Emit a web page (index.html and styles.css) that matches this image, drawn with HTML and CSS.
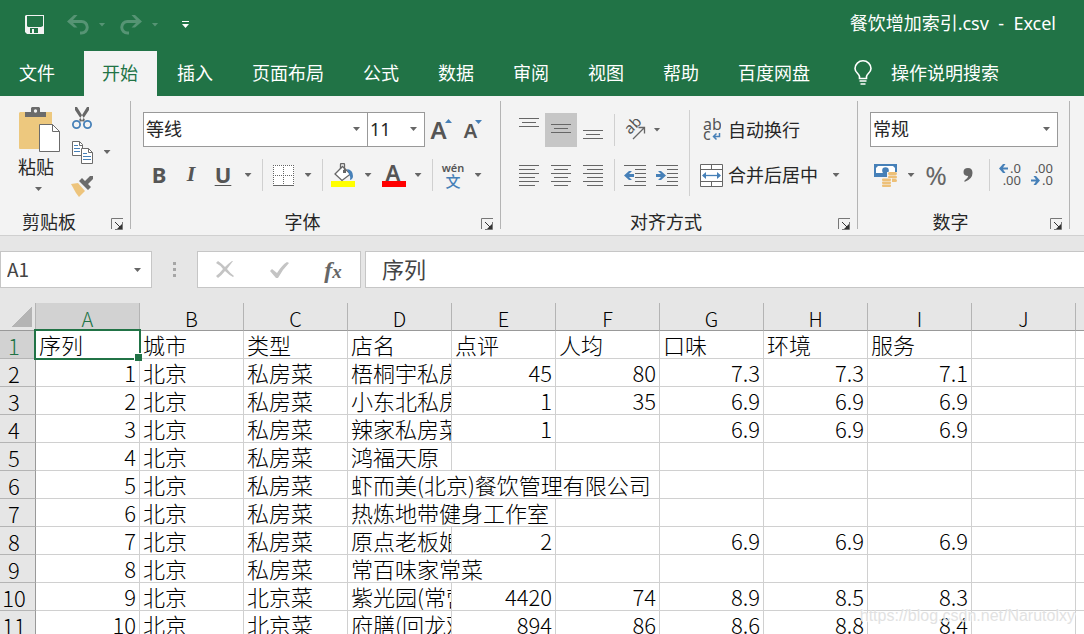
FILE: index.html
```html
<!DOCTYPE html>
<html lang="zh-CN">
<head>
<meta charset="utf-8">
<meta name="viewport" content="width=device-width, initial-scale=1">
<title>餐饮增加索引.csv - Excel</title>
<link rel="stylesheet" href="styles.css">
</head>
<body>
<header class="app-header">
  <div class="titlebar">
    <button class="quick" aria-label="保存"><svg width="20" height="20" viewBox="0 0 20 20"><path fill="#f3f3f3" fill-rule="evenodd" d="M1 0h18v19H2L0 17V1zM2 1v10l1 1h13l2-1V1zM5 13v5h2v-4h2v4h4v-5z"/></svg></button>
    <div class="quick-pair">
      <button class="quick faded" aria-label="撤消"><svg width="22" height="20" viewBox="0 0 22 20"><path fill="currentColor" d="M0 6.500L7 0h3.500L6 5h8.500a7 7 0 0 1 0 14.500H13v-3h1.500a4.200 4.200 0 0 0 0-8.500H6l4.500 4.500H7z"/></svg></button>
      <button class="quick-arrow faded" aria-label="撤消列表"><i class="caret"></i></button>
    </div>
    <div class="quick-pair">
      <button class="quick faded" aria-label="恢复"><svg width="22" height="20" viewBox="0 0 22 20"><path fill="currentColor" d="M22 6.500L15 0h-3.500L16 5H7.500a7 7 0 0 0 0 14.500H9v-3H7.500a4.200 4.200 0 0 1 0-8.500H16l-4.500 4.500H15z"/></svg></button>
      <button class="quick-arrow faded" aria-label="恢复列表"><i class="caret"></i></button>
    </div>
    <button class="quick customize" aria-label="自定义快速访问工具栏"><svg width="7" height="7" viewBox="0 0 7 7" fill="#fff"><path d="M0 0h7v1H0zM0 3h7L3.500 7z"/></svg></button>
    <h1 class="doc-title">餐饮增加索引.csv&nbsp; -&nbsp; Excel</h1>
  </div>
  <nav class="tabs">
    <button class="tab file">文件</button>
    <button class="tab active">开始</button>
    <button class="tab">插入</button>
    <button class="tab">页面布局</button>
    <button class="tab">公式</button>
    <button class="tab">数据</button>
    <button class="tab">审阅</button>
    <button class="tab">视图</button>
    <button class="tab">帮助</button>
    <button class="tab">百度网盘</button>
    <button class="tell-me"><svg width="18" height="25" viewBox="0 0 18 25" fill="none" stroke="#fff" stroke-width="1.600"><path d="M5.500 18.500v-2C5 13.500 1 12.500 1 8.500a8 7.700 0 0 1 16 0c0 4-4 5-4.500 8v2z"/><path d="M5.500 21h7M6.500 24h5"/></svg>操作说明搜索</button>
  </nav>
</header>

<section class="ribbon" aria-label="功能区">
  <div class="group clipboard">
    <div class="clip-tools">
      <button class="paste">
        <svg width="42" height="46" viewBox="0 0 42 46"><path fill="#edc87e" d="M1 5h32v37H1a1 1 0 0 1-1-1V6z"/><path fill="#6b6b6b" d="M6 5h6V1l1-1h7l1 1v4h6v5H6z"/><circle cx="16.500" cy="4" r="1.700" fill="#f3f3f3"/><path fill="#fff" stroke="#6b6b6b" d="M20.500 17.500h13l7 7v20h-20z"/><path fill="none" stroke="#6b6b6b" d="M33.500 17.500v7h7"/></svg>
        <span>粘贴</span>
        <i class="caret"></i>
      </button>
      <div class="clip-col">
        <div class="row"><button class="tool" aria-label="剪切"><svg width="20" height="24" viewBox="0 0 20 24"><path fill="#666" d="M3 1l2 0 8 13-2 2L3 4zM17 1l-2 0L7 14l2 2L17 4z"/><g fill="none" stroke="#4680b8" stroke-width="1.800"><circle cx="4.500" cy="18.500" r="3.600"/><circle cx="15.500" cy="18.500" r="3.600"/></g></svg></button></div>
        <div class="row"><button class="tool" aria-label="复制"><svg width="21" height="23" viewBox="0 0 21 23"><g fill="#fff" stroke="#6b6b6b"><path d="M.5.500h7l3 3v11H.5z"/><path d="M9.500 7.500h7l4 4v11h-11z"/></g><path fill="none" stroke="#6b6b6b" d="M7.500.500v4h3M16.500 7.500v4h4"/><path stroke="#4680b8" d="M2 4.500h4M2 7.500h6M2 10.500h6M11 12.500h4M11 15.500h8M11 18.500h8"/></svg></button><button class="drop" aria-label="复制选项"><i class="caret"></i></button></div>
        <div class="row"><button class="tool" aria-label="格式刷"><svg width="24" height="22" viewBox="0 0 24 22"><path fill="#edc47c" d="M1 9l7-1 7 8-6 6-3-4z"/><path fill="#6b6b6b" d="M9 6l3-3 3 3 5-5h3v3l-5 5 3 3-3 3z"/></svg></button></div>
      </div>
    </div>
    <div class="group-foot"><span>剪贴板</span><button class="launch" aria-label="剪贴板设置"><svg width="12" height="12" viewBox="0 0 12 12"><path fill="none" stroke="#777" d="M.5 11V.500H12M11.500 4v7.500H4"/><path stroke="#333" d="M4 4l6 6"/><path fill="#333" d="M11 6v5H6z"/></svg></button></div>
  </div>
  <i class="divider"></i>

  <div class="group font">
    <div class="row boxes">
      <span class="select font-name"><select aria-label="字体"><option>等线</option></select></span><span class="select font-size"><select aria-label="字号"><option>11</option></select></span>
      <button class="tool letter grow" aria-label="增大字号">A<svg width="7" height="4" viewBox="0 0 7 4"><path fill="#4680b8" d="M0 4L3.500 0 7 4z"/></svg></button>
      <button class="tool letter shrink" aria-label="减小字号">A<svg width="7" height="4" viewBox="0 0 7 4"><path fill="#4680b8" d="M0 0l3.500 4L7 0z"/></svg></button>
    </div>
    <div class="row lower">
      <button class="tool glyph bold">B</button>
      <button class="tool glyph italic">I</button>
      <button class="tool glyph under">U</button>
      <button class="drop" aria-label="下划线选项"><i class="caret"></i></button>
      <i class="rule"></i>
      <button class="tool" aria-label="边框"><svg width="21" height="21" viewBox="0 0 21 21"><path fill="#fff" d="M0 0h21v21H0z"/><path stroke="#666" stroke-dasharray="1 1" d="M0 .500h21M0 10.500h21M.5 0v20M10.500 0v20M20.500 0v20"/><path stroke="#666" d="M0 20.500h21"/></svg></button>
      <button class="drop" aria-label="边框选项"><i class="caret"></i></button>
      <i class="rule"></i>
      <button class="tool" aria-label="填充颜色"><svg width="24" height="24" viewBox="0 0 24 24"><path fill="#ff0" d="M0 18h24v6H0z"/><path fill="#fff" stroke="#666" stroke-width="1.300" d="M11.500 3.500l8 7.500-8.500 6.500L4 11z"/><path fill="none" stroke="#666" stroke-width="1.300" d="M9.500 6V1.500q0-1 1-1h2q1 0 1 1V9"/><path fill="#666" d="M12 7h3v3h-3z"/><path fill="#4680b8" d="M16 6q6 1 6 7 0 3-3 4 1-3-1-6z"/></svg></button>
      <button class="drop" aria-label="填充选项"><i class="caret"></i></button>
      <button class="tool font-color" aria-label="字体颜色">A</button>
      <button class="drop" aria-label="字体颜色选项"><i class="caret"></i></button>
      <i class="rule"></i>
      <button class="tool pinyin" aria-label="拼音"><span>wén</span><b>文</b></button>
      <button class="drop" aria-label="拼音选项"><i class="caret"></i></button>
    </div>
    <div class="group-foot"><span>字体</span><button class="launch" aria-label="字体设置"><svg width="12" height="12" viewBox="0 0 12 12"><path fill="none" stroke="#777" d="M.5 11V.500H12M11.500 4v7.500H4"/><path stroke="#333" d="M4 4l6 6"/><path fill="#333" d="M11 6v5H6z"/></svg></button></div>
  </div>
  <i class="divider"></i>

  <div class="group">
    <div class="align-tools">
      <div>
        <div class="row boxes">
          <button class="tool top" aria-label="顶端对齐"><svg width="20" height="9" viewBox="0 0 20 9"><path stroke="#666" d="M0 .500h20M3 4.500h14M0 8.500h20"/></svg></button>
          <button class="tool pressed" aria-label="垂直居中"><svg width="20" height="9" viewBox="0 0 20 9"><path stroke="#666" d="M0 .500h20M3 4.500h14M0 8.500h20"/></svg></button>
          <button class="tool bottom" aria-label="底端对齐"><svg width="20" height="9" viewBox="0 0 20 9"><path stroke="#666" d="M0 .500h20M3 4.500h14M0 8.500h20"/></svg></button>
          <i class="rule"></i>
          <button class="tool" aria-label="方向"><svg width="22" height="22" viewBox="0 0 22 22"><text class="svg-text" font-size="15" transform="translate(6 16) rotate(-45)">ab</text><path fill="none" stroke="#666" stroke-width="1.300" d="M9 20L20 9M14.500 8.500H20.500V14.500"/></svg></button>
          <button class="drop tight" aria-label="方向选项"><i class="caret"></i></button>
        </div>
        <div class="row lower">
          <button class="tool" aria-label="左对齐"><svg width="20" height="21" viewBox="0 0 20 21"><path stroke="#666" d="M0 .500h20M0 4.500h16M0 8.500h20M0 12.500h16M0 16.500h20M0 20.500h16"/></svg></button>
          <button class="tool" aria-label="居中"><svg width="20" height="21" viewBox="0 0 20 21"><path stroke="#666" d="M0 .500h20M3 4.500h14M0 8.500h20M3 12.500h14M0 16.500h20M3 20.500h14"/></svg></button>
          <button class="tool" aria-label="右对齐"><svg width="20" height="21" viewBox="0 0 20 21"><path stroke="#666" d="M0 .500h20M4 4.500h16M0 8.500h20M4 12.500h16M0 16.500h20M4 20.500h16"/></svg></button>
          <i class="rule"></i>
          <button class="tool" aria-label="减少缩进量"><svg width="22" height="21" viewBox="0 0 22 21"><path stroke="#666" d="M0 .500h22M11 4.500h11M11 8.500h11M11 12.500h11M11 16.500h11M0 20.500h22"/><path fill="#4680b8" d="M0 10.500L5 6h3L5 9h5v3H5l3 3H5z"/></svg></button>
          <button class="tool" aria-label="增加缩进量"><svg width="22" height="21" viewBox="0 0 22 21"><path stroke="#666" d="M0 .500h22M11 4.500h11M11 8.500h11M11 12.500h11M11 16.500h11M0 20.500h22"/><path fill="#4680b8" d="M10 10.500L5 6H2l3 3H0v3h5l-3 3h3z"/></svg></button>
        </div>
      </div>
      <i class="rule tall"></i>
      <div>
        <div class="row boxes">
          <button class="labelled"><svg class="wrap-icon" width="18" height="24" viewBox="0 0 18 24"><text class="svg-text" font-size="16" x="0" y="12">ab</text><text class="svg-text" font-size="16" x="0" y="22">c</text><path fill="none" stroke="#4680b8" stroke-width="1.500" d="M16.500 15v3.500H11M13.500 15.500l-3 3 3 3"/></svg>自动换行</button>
        </div>
        <div class="row lower">
          <button class="labelled"><svg width="24" height="23" viewBox="0 0 24 23"><path fill="#fff" stroke="#666" d="M.5.500h22v22H.5z"/><path fill="none" stroke="#666" d="M0 5.500h23M0 17.500h23M11.500 0v5.500M11.500 17.500V23"/><path fill="none" stroke="#4680b8" stroke-width="1.300" d="M3 11.500h17"/><path fill="#4680b8" d="M2 11.500L6 8v7zM21 11.500L17 8v7z"/></svg>合并后居中</button>
          <button class="drop wide" aria-label="合并选项"><i class="caret"></i></button>
        </div>
      </div>
    </div>
    <div class="group-foot"><span>对齐方式</span><button class="launch" aria-label="对齐设置"><svg width="12" height="12" viewBox="0 0 12 12"><path fill="none" stroke="#777" d="M.5 11V.500H12M11.500 4v7.500H4"/><path stroke="#333" d="M4 4l6 6"/><path fill="#333" d="M11 6v5H6z"/></svg></button></div>
  </div>
  <i class="divider"></i>

  <div class="group number">
    <div class="row boxes"><span class="select number-format"><select aria-label="数字格式"><option>常规</option></select></span></div>
    <div class="row lower">
      <button class="tool" aria-label="会计数字格式"><svg width="24" height="23" viewBox="0 0 24 23"><path fill="#4680b8" d="M0 0h23v13H0z"/><path fill="#fff" d="M4 2h15l2 2v5H2V4z"/><circle cx="11.500" cy="6.500" r="3.300" fill="#4680b8"/><path fill="#f3f3f3" d="M13 8h11v15H13z"/><g fill="#edc078"><rect x="14" y="8" width="9" height="3" rx="1.500"/><rect x="14" y="11.500" width="9" height="3" rx="1.500"/><rect x="14" y="15" width="9" height="3" rx="1.500"/></g><path fill="#f3f3f3" d="M7 14h11v9H7z"/><g fill="#edc078"><rect x="8" y="14.500" width="9" height="2.500" rx="1"/><rect x="8" y="17.500" width="9" height="2.500" rx="1"/><rect x="8" y="20.500" width="9" height="2.500" rx="1"/></g></svg></button>
      <button class="drop" aria-label="会计格式选项"><i class="caret"></i></button>
      <button class="tool percent">%</button>
      <button class="tool" aria-label="千位分隔样式"><svg width="10" height="14" viewBox="0 0 10 14"><path fill="#666" d="M5 0q4.500 0 4.500 5 0 6-8 9v-1.500q3.500-2 3.700-4.500Q.5 8 .5 4 .5 0 5 0z"/></svg></button>
      <i class="rule"></i>
      <button class="tool" aria-label="增加小数位数"><svg width="23" height="24" viewBox="0 0 23 24"><text class="svg-text num" x="22" y="10" text-anchor="end">.0</text><text class="svg-text num" x="22" y="22" text-anchor="end">.00</text><path fill="#4680b8" d="M0 5.500L4 1h2.500L4 4.500h5v2H4L6.500 10H4z"/></svg></button>
      <button class="tool" aria-label="减少小数位数"><svg width="23" height="24" viewBox="0 0 23 24"><text class="svg-text num" x="22" y="10" text-anchor="end">.00</text><text class="svg-text num" x="22" y="22" text-anchor="end">.0</text><path fill="#4680b8" d="M9 17.500L5 13H2.500L5 16.500H0v2h5L2.500 22H5z"/></svg></button>
    </div>
    <div class="group-foot"><span>数字</span><button class="launch" aria-label="数字设置"><svg width="12" height="12" viewBox="0 0 12 12"><path fill="none" stroke="#777" d="M.5 11V.500H12M11.500 4v7.500H4"/><path stroke="#333" d="M4 4l6 6"/><path fill="#333" d="M11 6v5H6z"/></svg></button></div>
  </div>
  <i class="divider"></i>
</section>

<section class="formula-bar" aria-label="编辑栏">
  <span class="select name-box"><input type="text" value="A1" aria-label="名称框"></span>
  <span class="grip"><i></i><i></i><i></i></span>
  <div class="formula-actions">
    <button aria-label="取消"><svg width="18" height="17" viewBox="0 0 18 17"><path fill="#c4c4c4" d="M0 2L2 0q3 2 7 6Q13 2 16 0h1L11 8q3 4 7 7l-1 1q-4-2-8-6-4 5-7 7l-2-2q4-3 7-7-3-4-7-6z"/></svg></button>
    <button aria-label="输入"><svg width="19" height="16" viewBox="0 0 19 16"><path fill="#c4c4c4" d="M0 9l2-2 5 4Q12 3 17 0l2 1Q12 8 8 16H6z"/></svg></button>
    <button class="fx" aria-label="插入函数">f<small>x</small></button>
  </div>
  <input class="formula-input" type="text" value="序列" aria-label="编辑栏">
</section>

<main class="sheet">
  <table>
    <colgroup><col class="num-col"><col span="11"></colgroup>
    <thead><tr><th class="corner"></th><th class="selected">A</th><th>B</th><th>C</th><th>D</th><th>E</th><th>F</th><th>G</th><th>H</th><th>I</th><th>J</th><th></th></tr></thead>
    <tbody>
      <tr><th class="selected">1</th><td class="cursor">序列</td><td>城市</td><td>类型</td><td>店名</td><td>点评</td><td>人均</td><td>口味</td><td>环境</td><td>服务</td><td></td><td></td></tr>
      <tr><th>2</th><td class="n">1</td><td>北京</td><td>私房菜</td><td>梧桐宇私房菜</td><td class="n">45</td><td class="n">80</td><td class="n">7.3</td><td class="n">7.3</td><td class="n">7.1</td><td></td><td></td></tr>
      <tr><th>3</th><td class="n">2</td><td>北京</td><td>私房菜</td><td>小东北私房菜</td><td class="n">1</td><td class="n">35</td><td class="n">6.9</td><td class="n">6.9</td><td class="n">6.9</td><td></td><td></td></tr>
      <tr><th>4</th><td class="n">3</td><td>北京</td><td>私房菜</td><td>辣家私房菜</td><td class="n">1</td><td></td><td class="n">6.9</td><td class="n">6.9</td><td class="n">6.9</td><td></td><td></td></tr>
      <tr><th>5</th><td class="n">4</td><td>北京</td><td>私房菜</td><td>鸿福天原</td><td></td><td></td><td></td><td></td><td></td><td></td><td></td></tr>
      <tr><th>6</th><td class="n">5</td><td>北京</td><td>私房菜</td><td colspan="3">虾而美(北京)餐饮管理有限公司</td><td></td><td></td><td></td><td></td><td></td></tr>
      <tr><th>7</th><td class="n">6</td><td>北京</td><td>私房菜</td><td colspan="2">热炼地带健身工作室</td><td></td><td></td><td></td><td></td><td></td><td></td></tr>
      <tr><th>8</th><td class="n">7</td><td>北京</td><td>私房菜</td><td>原点老板娘</td><td class="n">2</td><td></td><td class="n">6.9</td><td class="n">6.9</td><td class="n">6.9</td><td></td><td></td></tr>
      <tr><th>9</th><td class="n">8</td><td>北京</td><td>私房菜</td><td colspan="2">常百味家常菜</td><td></td><td></td><td></td><td></td><td></td><td></td></tr>
      <tr><th>10</th><td class="n">9</td><td>北京</td><td>北京菜</td><td>紫光园(常营店)</td><td class="n">4420</td><td class="n">74</td><td class="n">8.9</td><td class="n">8.5</td><td class="n">8.3</td><td></td><td></td></tr>
      <tr><th>11</th><td class="n">10</td><td>北京</td><td>北京菜</td><td>府膳(回龙观店)</td><td class="n">894</td><td class="n">86</td><td class="n">8.6</td><td class="n">8.8</td><td class="n">8.4</td><td></td><td></td></tr>
    </tbody>
  </table>
  <span class="watermark">https://blog.csdn.net/Narutolxy</span>
</main>
</body>
</html>
```

FILE: styles.css
```css
:root {
  --green: #217346;
  --ink: #262626;
  --icon: #555;
  --ui: "Noto Sans", "Noto Sans CJK SC", sans-serif;
  --cell: "Noto Sans CJK SC", sans-serif;
}

* { box-sizing: border-box; }

body {
  margin: 0;
  height: 100vh;
  display: flex;
  flex-direction: column;
  overflow: hidden;
  background: #e6e6e6;
  color: var(--ink);
  font: 18px/20px var(--ui);
}

button, select, input {
  margin: 0;
  padding: 0;
  border: 0;
  border-radius: 0;
  background: none;
  color: inherit;
  font: inherit;
}

button {
  display: flex;
  align-items: center;
  justify-content: center;
  flex: none;
}

svg { display: block; flex: none; }

.caret {
  display: block;
  width: 7px;
  height: 4px;
  background: currentColor;
  clip-path: polygon(0 0, 100% 0, 50% 100%);
}

/* Title bar and tabs */
.app-header { flex: none; background: var(--green); color: #fff; }

.titlebar {
  display: flex;
  align-items: center;
  height: 51px;
  padding: 0 28px 2px 19px;
}

.quick { width: 32px; height: 32px; }
.quick-pair { display: flex; align-items: center; margin-left: 11px; }
.quick-pair + .quick-pair { margin-left: 5px; }
.quick-arrow { width: 16px; height: 32px; }
.faded { color: #569474; }
.customize { margin-left: 6px; }

.doc-title {
  margin: 0 0 0 auto;
  padding-bottom: 3px;
  font-size: 18px;
  font-weight: 400;
  white-space: nowrap;
}

.tabs { display: flex; gap: 2px; height: 45px; padding-left: 1px; }
.tab { padding: 0 19px 2px 18px; white-space: nowrap; }
.tab.file { margin-right: 8px; }
.tab.active { background: #f3f3f3; color: var(--green); }
.tell-me { gap: 19px; margin-left: 23px; padding-bottom: 2px; white-space: nowrap; }

/* Ribbon */
.ribbon {
  display: flex;
  flex: none;
  padding: 5px 0 3px;
  background: #f3f3f3;
  border-bottom: 1px solid #d0d0d0;
}

.group {
  display: flex;
  flex: none;
  flex-direction: column;
  padding-left: 12px;
}
.group.font, .group.number { padding-right: 11px; }
.font .group-foot, .number .group-foot { margin-right: -11px; }

.divider { width: 1px; margin-bottom: 3px; background: #b4b4b4; }
.row { display: flex; align-items: center; }
.row.boxes { height: 35px; margin-top: 11px; }
.row.lower { height: 34px; margin-top: 11px; }

.tool { position: relative; width: 32px; height: 34px; color: var(--icon); }
.drop { width: 18px; height: 34px; color: #666; }
.drop.tight { width: 12px; }
.drop.wide { width: 36px; }
.rule { flex: none; width: 1px; height: 32px; margin: 0 4px 0 5px; background: #d0d0d0; }
.rule.tall { height: auto; margin: 9px 6px -4px; }

.group-foot { display: flex; height: 20px; margin: 20px 0 0 -12px; }
.group-foot span { flex: 1; text-align: center; }
.launch { width: 26px; height: 20px; padding-top: 3px; }

.clipboard { padding-left: 18px; }
.clipboard .group-foot { margin: auto 0 0 -18px; }
.clip-tools { display: flex; gap: 4px; padding-right: 14px; }
.clipboard .group-foot span { padding-right: 6px; }
.paste { flex-direction: column; align-items: flex-start; justify-content: flex-start; width: 44px; padding-top: 6px; }
.paste svg { margin-left: 1px; }
.paste span { margin-top: 4px; }
.paste .caret { margin: 10px 0 0 17px; color: #666; }

.select { position: relative; flex: none; }
.select::after {
  content: "";
  position: absolute;
  top: 15px;
  right: 8px;
  width: 7px;
  height: 4px;
  background: #666;
  clip-path: polygon(0 0, 100% 0, 50% 100%);
  pointer-events: none;
}
.select select {
  width: 100%;
  height: 35px;
  padding: 0 0 1px 2px;
  border: 1px solid #999;
  background: #fff;
  appearance: none;
}
.font-name { width: 225px; margin-right: -1px; }
.font-size { width: 58px; }
.number-format { width: 188px; }

.letter { font-weight: 600; font-size: 24px; }
.letter.shrink { font-size: 20px; padding-top: 3px; }
.letter svg { margin: 0 0 18px -2px; }
.glyph { padding-bottom: 3px; font-size: 22px; font-weight: 700; }
.italic { font-family: "Liberation Serif", serif; font-style: italic; }
.under { text-decoration: underline; text-decoration-thickness: 1px; text-underline-offset: 2px; }
.font-color { font-size: 22px; font-weight: 600; padding-bottom: 6px; }
.font-color::after {
  content: "";
  position: absolute;
  bottom: 5px;
  left: 5px;
  width: 24px;
  height: 6px;
  background: #f00;
}
.pinyin { flex-direction: column; font-size: 11px; line-height: 12px; font-weight: 600; }
.pinyin b { color: #4680b8; font-size: 15px; line-height: 15px; font-weight: 500; }
.percent { font-size: 26px; color: #666; }

.svg-text { fill: #555; font-family: "Noto Sans", sans-serif; }
.svg-text.num { font-size: 13px; }

.top { padding-bottom: 14px; }
.bottom { padding-top: 10px; }
.pressed { background: #c6c6c6; padding-bottom: 2px; }
.align-tools { display: flex; padding-right: 3px; }
.labelled { white-space: nowrap; padding-left: 4px; gap: 4px; }
.wrap-icon { margin: 0 3px; }

/* Formula bar */
.formula-bar { display: flex; flex: none; padding: 15px 0; color: #444; }
.name-box { width: 152px; }
.name-box::after { top: 17px; right: 11px; }
.name-box input { width: 100%; height: 37px; padding: 0 30px 2px 6px; border: 1px solid #c6c6c6; background: #fff; font: 19px var(--cell); }
.grip { display: flex; flex-direction: column; justify-content: center; align-items: center; gap: 3px; width: 45px; }
.grip i { width: 3px; height: 3px; background: #a6a6a6; }
.formula-actions { display: flex; width: 164px; height: 37px; margin-right: 4px; border: 1px solid #c6c6c6; background: #fff; }
.formula-actions button { flex: 1; }
.fx { color: #666; font: italic 700 24px/24px "Liberation Serif", serif; }
.fx small { font-size: 19px; padding-top: 5px; }
.formula-input { flex: 1; min-width: 0; height: 37px; padding: 0 0 4px 16px; border: 1px solid #c6c6c6; border-right: 0; background: #fff; font: 22px var(--cell); }

/* Worksheet */
.sheet { position: relative; flex: 1; min-height: 0; overflow: hidden; background: #fff; color: #000; }
table { width: 1180px; table-layout: fixed; border-collapse: separate; border-spacing: 0; font: 300 22px/25px var(--cell); }
col { width: 104px; }
.num-col { width: 36px; }
tr { height: 28px; }
th, td {
  height: 28px;
  padding: 0 3px 1px;
  border: solid #d0d0d0;
  border-width: 0 1px 1px 0;
  overflow: hidden;
  white-space: nowrap;
  text-align: left;
  font-weight: 300;
}
th { padding: 1px 0 0; background: #e6e6e6; text-align: center; border-color: #b4b4b4; }
thead th { border-bottom-color: #999; font-size: 20px; padding-top: 3px; line-height: 23px; }
tbody th { border-right-color: #999; padding-right: 7px; }
th.selected { background: #d2d2d2; color: var(--green); }
th.corner { background: linear-gradient(to bottom right, transparent 50%, #b4b4b4 50%) 12px 4px / 20px 20px no-repeat #e6e6e6; }
.n { text-align: right; }

.cursor { position: relative; overflow: visible; }
.cursor::before {
  content: "";
  position: absolute;
  inset: -2px;
  border: 2px solid var(--green);
}
.cursor::after {
  content: "";
  position: absolute;
  right: -3px;
  bottom: -3px;
  width: 7px;
  height: 7px;
  border: solid #fff;
  border-width: 1px 0 0 1px;
  background: var(--green);
}

.watermark {
  position: absolute;
  right: 9px;
  bottom: 8px;
  color: #e2e2e2;
  font: 16px/20px "Liberation Sans", sans-serif;
  text-shadow: 1px 1px 1px #fff;
}
```
